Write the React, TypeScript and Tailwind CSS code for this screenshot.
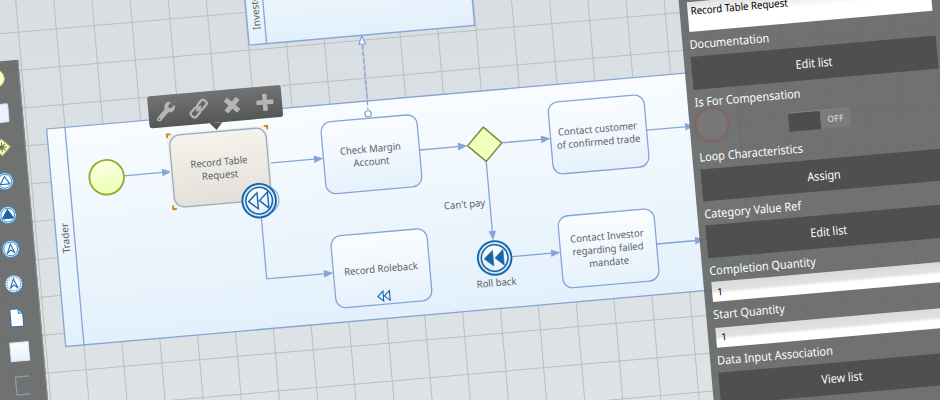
import React from "react";
import { FaWrench } from "react-icons/fa";

const LINE = "#86a5d6";
const EVENT = "#1766a8";

const tasks = [
  { x: 308.4, y: 150, lines: ["Check Margin", "Account"] },
  { x: 536.4, y: 150, lines: ["Contact customer", "of confirmed trade"] },
  { x: 308.4, y: 264.4, lines: ["Record Roleback"] },
  { x: 536.4, y: 264.4, lines: ["Contact Investor", "regarding failed", "mandate"] },
];

const verticals = Array.from({ length: 30 }, (_, i) => 15.6 + 38 * (i - 2));
const horizontals = Array.from({ length: 16 }, (_, i) => 71.7 + 38 * (i - 3));

function Rewind({ x, y, s = 1, filled = false }: { x: number; y: number; s?: number; filled?: boolean }) {
  return (
    <g transform={`translate(${x} ${y}) scale(${s})`} fill={filled ? EVENT : "none"} stroke={EVENT} strokeWidth={filled ? 0.5 : 1.4 / Math.sqrt(s)}>
      <path d="M-10.5 0 L-1.5 -8 V8 Z M0.3 0 L9 -8 V8 Z" />
    </g>
  );
}

function RewindEvent({ x, y, filled }: { x: number; y: number; filled?: boolean }) {
  return (
    <g>
      <circle cx={x} cy={y} r="16.8" fill="#d3e9f7" stroke={EVENT} strokeWidth="1.9" />
      <circle cx={x} cy={y} r="13.3" fill="url(#task)" stroke={EVENT} strokeWidth="1.5" />
      <Rewind x={x} y={y} filled={filled} />
    </g>
  );
}

function Arrow({ x, y, down }: { x: number; y: number; down?: boolean }) {
  return <path d="M0 0 L-9.5 -3.8 V3.8 Z" fill={LINE} transform={`translate(${x} ${y}) rotate(${down ? 90 : 0})`} />;
}

function Diagram() {
  return (
    <svg className="absolute left-0 top-0 overflow-visible" width="940" height="400">
      <defs>
        <linearGradient id="pool" x1="0" y1="0" x2="0" y2="1">
          <stop offset="0" stopColor="#f8fcff" />
          <stop offset="1" stopColor="#e3f0fb" />
        </linearGradient>
        <linearGradient id="task" x1="0" y1="0" x2="0" y2="1">
          <stop offset="0" stopColor="#fafdff" />
          <stop offset="1" stopColor="#e6f1fc" />
        </linearGradient>
        <linearGradient id="picked" x1="0" y1="0" x2="0" y2="1">
          <stop offset="0" stopColor="#f5f3ec" />
          <stop offset="1" stopColor="#e2e0d9" />
        </linearGradient>
        <linearGradient id="lime" x1="0" y1="0" x2="0" y2="1">
          <stop offset="0" stopColor="#fcffe8" />
          <stop offset="1" stopColor="#edffb0" />
        </linearGradient>
      </defs>
      <g stroke="#babec0" strokeWidth="1">
        {verticals.map((x) => <path key={x} d={`M${x} -60 V540`} />)}
        {horizontals.map((y) => <path key={y} d={`M-60 ${y} H1000`} />)}
      </g>
      <g fill="url(#pool)" stroke={LINE} strokeWidth="1.3">
        <rect x="244.2" y="-60" width="226.3" height="126.7" />
        <path d="M261.8 -60 V66.7" />
        <rect x="35.2" y="132.6" width="690" height="218.3" />
        <path d="M53.6 132.6 V350.9" />
      </g>
      <g fill="none" stroke={LINE} strokeWidth="1.3">
        <path d="M108 186 H150 M254 186 H302 M405 186 H446 M488 186 H530 M633 186 H676 M470.3 203 V276 M488 300.3 H530 M633 300.3 H676 M241.4 240 V301 H302" />
        <path d="M357 76 V141" strokeDasharray="5 2" />
        <circle cx="356.8" cy="145.4" r="3.2" fill="#fff" />
        <path d="M357 67.5 L360.3 75.5 H353.7 Z" fill="#fff" />
      </g>
      <Arrow x={156} y={186} />
      <Arrow x={308.4} y={186} />
      <Arrow x={453} y={186} />
      <Arrow x={536.4} y={186} />
      <Arrow x={681} y={186} />
      <Arrow x={536.4} y={300.3} />
      <Arrow x={681} y={300.3} />
      <Arrow x={308.4} y={301} />
      <Arrow x={470.3} y={282.5} down />
      {tasks.map((t) => (
        <rect key={t.lines[0]} x={t.x} y={t.y} width="96.4" height="72.2" rx="10" fill="url(#task)" stroke={LINE} strokeWidth="1.3" />
      ))}
      <Rewind x={357} y={328.3} s={0.62} />
      <rect x="154" y="148" width="101.5" height="76" fill="#f3f1ea" />
      <rect x="156.4" y="150" width="96.8" height="72.2" rx="10" fill="url(#picked)" stroke="#98abc4" strokeWidth="1.3" />
      <path d="M154.4 152 V148.6 H158 M251.7 148.6 H255.2 V152 M154.4 220 V223.6 H158" fill="none" stroke="#c98a24" strokeWidth="1.9" />
      <circle cx="90.8" cy="185.9" r="17.3" fill="url(#lime)" stroke="#93ac2a" strokeWidth="1.8" />
      <path d="M470.3 168.8 L487.5 186 L470.3 203.2 L453.1 186 Z" fill="#f3ffbd" stroke="#7b8f43" strokeWidth="1.5" />
      <circle cx="246.5" cy="222.5" r="14" fill="#edf5fc" stroke={LINE} />
      <RewindEvent x={240.7} y={222.5} />
      <RewindEvent x={470.3} y={300.1} filled />
    </svg>
  );
}

function Caption({ x, y, lines }: { x: number; y: number; lines: string[] }) {
  return (
    <div
      className="absolute -translate-x-1/2 -translate-y-1/2 scale-x-95 whitespace-nowrap text-center text-[10px] leading-[13px] text-[#5c5f63]"
      style={{ left: x, top: y }}
    >
      {lines.map((l) => <div key={l}>{l}</div>)}
    </div>
  );
}

function Toolbar() {
  return (
    <div className="absolute left-[138.3px] top-[109.3px] grid h-[32.2px] w-[133.8px] grid-cols-4 place-items-center rounded-[3px] bg-linear-to-b from-[#737373] to-[#555656] text-[#b5b5b5]">
      <FaWrench size={19} />
      <svg width="21" height="21" viewBox="-10.5 -10.5 21 21" fill="none" stroke="currentColor" strokeWidth="2.3">
        <g transform="rotate(-45)">
          <rect x="-10" y="-3.4" width="10" height="6.8" rx="2.6" />
          <rect x="0" y="-3.4" width="10" height="6.8" rx="2.6" />
          <path d="M-3.5 0 H3.5" />
        </g>
      </svg>
      <svg width="18" height="18" viewBox="-9 -9 18 18" stroke="currentColor" strokeWidth="5">
        <path d="M-6.2 -6.2 L6.2 6.2 M6.2 -6.2 L-6.2 6.2" />
      </svg>
      <svg width="18" height="18" viewBox="-9 -9 18 18" stroke="currentColor" strokeWidth="4.6">
        <path d="M-8.5 0 H8.5 M0 -8.5 V8.5" />
      </svg>
      <svg className="absolute left-[60px] top-[32px]" width="13" height="8" fill="#555656"><path d="M0 0 H13 L6.5 7.5 Z" /></svg>
    </div>
  );
}

function PaletteIcon({ kind }: { kind: string }) {
  return (
    <svg width="22" height="22" viewBox="-11 -11 22 22" fill="none">
      {kind === "start" && <circle r="8.5" fill="#f5ffcf" stroke="#b4cc55" />}
      {kind === "task" && <rect x="-9.5" y="-9" width="19" height="18" rx="1.5" fill="#eaf2fd" stroke="#d5e2f3" />}
      {kind === "gateway" && (
        <>
          <path d="M0 -8.5 L8.5 0 L0 8.5 L-8.5 0 Z" fill="#f3ffc6" stroke="#a7b678" />
          <path d="M-5 0 H5 M0 -5 V5 M-3.3 -3.3 L3.3 3.3 M-3.3 3.3 L3.3 -3.3" stroke="#5f6c35" />
        </>
      )}
      {["catch", "throw", "escalate", "dashed"].includes(kind) && (
        <>
          <circle r="8.6" fill="#e4f2fc" stroke="#3d83bd" strokeWidth="1" strokeDasharray={kind === "dashed" ? "1.5 1" : undefined} />
          <circle r="6.9" fill="#f6fbff" stroke="#3d83bd" strokeWidth="0.9" strokeDasharray={kind === "dashed" ? "1.5 1" : undefined} />
        </>
      )}
      {kind === "catch" && <path d="M0 -4.8 L4.7 3 H-4.7 Z" stroke={EVENT} />}
      {kind === "throw" && <path d="M0 -5.5 L5.5 3.3 H-5.5 Z" fill={EVENT} stroke={EVENT} />}
      {(kind === "escalate" || kind === "dashed") && <path d="M0 -5 L3.8 4.2 L0 1 L-3.8 4.2 Z" stroke={EVENT} />}
      {kind === "data" && (
        <>
          <path d="M-6.3 -8.8 H2 L6.3 -4.3 V8.8 H-6.3 Z" fill="#fff" stroke="#2a6fa8" strokeWidth="1.1" />
          <path d="M2 -8.8 V-4.3 H6.3" stroke="#2a6fa8" />
        </>
      )}
      {kind === "group" && <rect x="-9.2" y="-9.2" width="18.4" height="18.4" fill="url(#task)" stroke="#dce8f4" />}
      {kind === "note" && <path d="M7 -9 H-6.5 V9 H7" stroke="#8f9fb7" strokeWidth="1.2" />}
    </svg>
  );
}

function Palette() {
  return (
    <div className="absolute left-[-35px] top-[61.3px] flex h-[400px] w-[47.8px] flex-col border-r border-[#8d8f8f] bg-[#666867]/92">
      {["start", "task", "gateway", "catch", "throw", "escalate", "dashed", "data", "group", "note"].map((k) => (
        <div key={k} className="flex h-[34.2px] shrink-0 items-center justify-center pl-px"><PaletteIcon kind={k} /></div>
      ))}
    </div>
  );
}

function Label({ children, tall = "h-[25px]" }: { children: React.ReactNode; tall?: string }) {
  return <div className={`shrink-0 origin-left scale-x-[0.91] whitespace-nowrap text-[12px] leading-[25px] text-white ${tall}`}>{children}</div>;
}

function Button({ children }: { children: React.ReactNode }) {
  return (
    <div className="flex h-[32.7px] w-[246px] shrink-0 items-center justify-center bg-[#4f4f4f] pr-px pt-px text-[12px] text-white">
      <span className="scale-x-90">{children}</span>
    </div>
  );
}

function Field() {
  return <div className="ml-px flex h-[19.8px] w-[244px] shrink-0 items-center bg-linear-to-b from-[#dadada] from-0% via-[#e2e2e2] via-45% to-white to-60% pl-[5px] text-[10px] text-black">1</div>;
}

function Properties() {
  return (
    <div className="absolute left-[676px] top-0 flex h-[560px] w-[320px] flex-col bg-[#666867]/92 pl-[7px] pt-[62px]">
      <div className="ml-px h-[30px] w-[244px] shrink-0 bg-linear-to-b from-[#e0e0e0] to-white to-50% pl-[3px] text-[10.5px] leading-[19px] text-black">
        <div className="origin-left scale-x-[0.92]">Record Table Request</div>
      </div>
      <Label>Documentation</Label>
      <Button>Edit list</Button>
      <Label>Is For Compensation</Label>
      <div className="flex h-[30px] w-[246px] shrink-0 pt-[6px]">
        <svg className="-mt-3 mr-[57px] shrink-0 overflow-visible" width="35" height="35">
          <circle cx="15.5" cy="17.2" r="16.8" fill="#787676" stroke="#806464" strokeWidth="2.2" />
        </svg>
        <div className="flex h-[19px] w-[62px] border-t border-[#858686]">
          <div className="w-[32px] bg-[#4d4d4d]" />
          <div className="flex flex-1 items-center justify-center bg-[#7b7b7b] text-[9px] font-semibold text-[#c8c8c8]">OFF</div>
        </div>
      </div>
      <Label>Loop Characteristics</Label>
      <Button>Assign</Button>
      <Label tall="h-[23.8px]">Category Value Ref</Label>
      <Button>Edit list</Button>
      <Label tall="h-[24.4px]">Completion Quantity</Label>
      <Field />
      <Label tall="h-[26px]">Start Quantity</Label>
      <Field />
      <Label tall="h-[24.8px]">Data Input Association</Label>
      <Button>View list</Button>
    </div>
  );
}

export default function App() {
  return (
    <div className="relative h-[400px] w-[940px] overflow-hidden bg-linear-to-b from-[#d9dee2] to-[#dee3e6] font-['Noto_Sans',sans-serif]">
      <div className="absolute left-0 top-0 h-[400px] w-[940px] origin-top-left -rotate-5">
        <Diagram />
        <Caption x={203.5} y={187} lines={["Record Table", "Request"]} />
        {tasks.map((t) => <Caption key={t.lines[0]} x={t.x + 47.6} y={t.y + 36.8} lines={t.lines} />)}
        <Caption x={445.4} y={243.7} lines={["Can't pay"]} />
        <Caption x={470} y={324.5} lines={["Roll back"]} />
        <div className="absolute left-[44px] top-[242.5px] -translate-x-1/2 -translate-y-1/2 -rotate-90 text-[10px] leading-[14px] text-[#5c5f63]">Trader</div>
        <div className="absolute left-[246px] top-[51.5px] origin-top-left -rotate-90 text-[10px] leading-[14px] text-[#5c5f63]">Investor</div>
        <Toolbar />
        <Palette />
        <Properties />
      </div>
    </div>
  );
}
